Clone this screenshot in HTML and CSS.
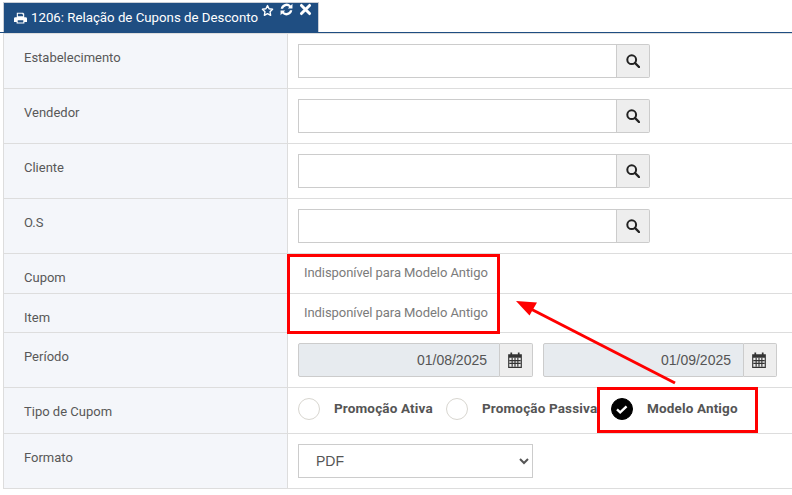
FILE: index.html
```html
<!DOCTYPE html>
<html lang="pt">
<head>
<meta charset="utf-8">
<title>Relação de Cupons de Desconto</title>
<link rel="stylesheet" href="styles.css">
</head>
<body>
<div class="tabbar">
  <div class="tab">
    <svg class="ico-print" viewBox="0 0 14 14" preserveAspectRatio="none"><path fill="#fff" fill-rule="evenodd" d="M3 .8h6.800L11 2v4H3zM4.200 2v3h5.600V3H9V2zM1.500 6.200A1.500 1.500 0 0 0 0 7.700v4h2.800v1.800h8.400v-1.800H14v-4a1.500 1.500 0 0 0-1.500-1.500zM4 9.700h6v2.600H4z"/></svg>
    <span class="tab-title">1206: Relação de Cupons de Desconto</span>
    <span class="tab-tools">
      <svg class="tool tool-star" viewBox="0 0 24 24"><path fill="none" stroke="#fff" stroke-width="2.600" stroke-linejoin="round" d="M12 2.800l2.900 6 6.500.9-4.700 4.600 1.100 6.500-5.800-3.100-5.800 3.100 1.100-6.500L2.600 9.700l6.500-.9z"/></svg>
      <svg class="tool" viewBox="0 0 24 24"><path fill="#fff" d="M21 10h-6.500L17 7.500a7 7 0 0 0-11.500 3H1.300A11 11 0 0 1 20 4.500L23 1.500V10zM3 14h6.500L7 16.500a7 7 0 0 0 11.500-3h4.200A11 11 0 0 1 4 19.500L1 22.500V14z"/></svg>
      <svg class="tool" viewBox="0 0 24 24"><path fill="none" stroke="#fff" stroke-width="5.500" stroke-linecap="round" d="M4.500 4.500l15 15M19.500 4.500l-15 15"/></svg>
    </span>
  </div>
</div>
<div class="form">
  <div class="row r55"><div class="lab">Estabelecimento</div><div class="val">
    <div class="search"><div class="inp"></div><div class="addon"><svg class="ico-s" viewBox="0 0 14 14"><circle cx="5.700" cy="5.700" r="4.400" fill="none" stroke="#222" stroke-width="2"/><path d="M9 9l4 4" stroke="#222" stroke-width="2.400" stroke-linecap="round"/></svg></div></div>
  </div></div>
  <div class="row r55"><div class="lab">Vendedor</div><div class="val">
    <div class="search"><div class="inp"></div><div class="addon"><svg class="ico-s" viewBox="0 0 14 14"><circle cx="5.700" cy="5.700" r="4.400" fill="none" stroke="#222" stroke-width="2"/><path d="M9 9l4 4" stroke="#222" stroke-width="2.400" stroke-linecap="round"/></svg></div></div>
  </div></div>
  <div class="row r55"><div class="lab">Cliente</div><div class="val">
    <div class="search"><div class="inp"></div><div class="addon"><svg class="ico-s" viewBox="0 0 14 14"><circle cx="5.700" cy="5.700" r="4.400" fill="none" stroke="#222" stroke-width="2"/><path d="M9 9l4 4" stroke="#222" stroke-width="2.400" stroke-linecap="round"/></svg></div></div>
  </div></div>
  <div class="row r55"><div class="lab">O.S</div><div class="val">
    <div class="search"><div class="inp"></div><div class="addon"><svg class="ico-s" viewBox="0 0 14 14"><circle cx="5.700" cy="5.700" r="4.400" fill="none" stroke="#222" stroke-width="2"/><path d="M9 9l4 4" stroke="#222" stroke-width="2.400" stroke-linecap="round"/></svg></div></div>
  </div></div>
  <div class="row r40"><div class="lab">Cupom</div><div class="val val-text">Indisponível para Modelo Antigo</div></div>
  <div class="row r39"><div class="lab">Item</div><div class="val val-text">Indisponível para Modelo Antigo</div></div>
  <div class="row r55"><div class="lab">Período</div><div class="val dates">
    <div class="date"><div class="date-inp">01/08/2025</div><div class="date-add"><svg class="ico-c" viewBox="1 0 12 14"><path fill="#333" fill-rule="evenodd" d="M1 2h2V.5h1.500V2h5V.5H11V2h2v12H1zM2 5v8h10V5z"/><path stroke="#333" stroke-width="1" d="M2 7.500h10M2 10h10M4.500 5v8M7 5v8M9.500 5v8"/></svg></div></div>
    <div class="date"><div class="date-inp date-inp2">01/09/2025</div><div class="date-add"><svg class="ico-c" viewBox="1 0 12 14"><path fill="#333" fill-rule="evenodd" d="M1 2h2V.5h1.500V2h5V.5H11V2h2v12H1zM2 5v8h10V5z"/><path stroke="#333" stroke-width="1" d="M2 7.500h10M2 10h10M4.500 5v8M7 5v8M9.500 5v8"/></svg></div></div>
  </div></div>
  <div class="row r46"><div class="lab">Tipo de Cupom</div><div class="val radios">
    <span class="radio"></span><span class="radio-lab rl1">Promoção Ativa</span>
    <span class="radio"></span><span class="radio-lab rl2">Promoção Passiva</span>
    <span class="radio on"><svg viewBox="0 0 22 22"><path d="M5.500 11.500l3.500 3.300 7-6.600" fill="none" stroke="#fff" stroke-width="2.600"/></svg></span><span class="radio-lab">Modelo Antigo</span>
  </div></div>
  <div class="row r55"><div class="lab">Formato</div><div class="val">
    <select class="sel"><option>PDF</option></select>
  </div></div>
</div>
<div class="box box-a"></div>
<div class="box box-b"></div>
<svg class="arrow" viewBox="0 0 792 495"><path d="M675 383L527 307" stroke="#f00" stroke-width="3" fill="none"/><path d="M516 301l21 1.500-7.500 13z" fill="#f00"/></svg>
</body>
</html>
```

FILE: styles.css
```css
* { box-sizing: border-box; }
html, body { margin: 0; padding: 0; background: #fff; }
body {
  width: 792px;
  height: 495px;
  overflow: hidden;
  position: relative;
  font-family: Roboto, "Liberation Sans", sans-serif;
  font-size: 13px;
  color: #555;
}
.tabbar {
  height: 33px;
  padding-left: 3px;
  padding-top: 2px;
  border-bottom: 1px solid #1f4e82;
}
.tab {
  width: 316px;
  height: 30px;
  background: #1f4e82;
  border: 1px solid #c9ced6;
  border-bottom: 0;
  color: #fff;
  display: flex;
  align-items: flex-start;
  padding-left: 10px;
}
.ico-print { width: 13px; height: 12px; margin-top: 9px; flex: none; }
.tab-title { margin-left: 4px; margin-top: 6px; line-height: 17px; font-size: 13.250px; white-space: nowrap; flex: none; }
.tab-tools { display: flex; gap: 6px; margin-left: 3px; margin-top: 0; }
.tool { width: 13px; height: 13px; }
.tool-star { margin-top: 1px; }
.form { margin-left: 3px; border-left: 1px solid #ddd; border-top: 1px solid #ddd; }
.row { display: flex; border-bottom: 1px solid #ddd; }
.r55 { height: 55px; }
.r40 { height: 40px; }
.r39 { height: 39px; }
.r46 { height: 46px; }
.lab {
  width: 284px;
  flex: none;
  background: #f4f6fa;
  border-right: 1px solid #ddd;
  padding: 15px 0 0 20px;
  line-height: 17px;
  color: #585858;
}
.val { flex: 1; padding: 10px 0 0 10px; }
.val-text { padding: 10px 0 0 16px; line-height: 17px; color: #7b7b7b; letter-spacing: -.07px; }
.search { display: flex; width: 352px; height: 34px; }
.inp { flex: 1; border: 1px solid #ccc; background: #fff; }
.addon {
  width: 33px;
  border: 1px solid #ccc;
  border-left: 0;
  border-radius: 0 2px 2px 0;
  background: #eee;
  display: flex;
  align-items: center;
  justify-content: center;
}
.ico-s { width: 14px; height: 14px; }
.dates { display: flex; gap: 10px; }
.date { display: flex; height: 34px; }
.date-inp {
  width: 202px;
  background: #e7ebef;
  border: 1px solid #ccc;
  border-radius: 2px 0 0 2px;
  text-align: right;
  padding: 7px 12px 0 0;
  line-height: 18px;
  font-family: "Liberation Sans", sans-serif;
  font-size: 14px;
  color: #555;
}
.date-inp2 { width: 201px; }
.date-add {
  width: 33px;
  background: #eee;
  border: 1px solid #ccc;
  border-left: 0;
  border-radius: 0 2px 2px 0;
  display: flex;
  align-items: center;
  justify-content: center;
  padding-right: 3px;
}
.ico-c { width: 14px; height: 16px; }
.radios { display: flex; align-items: flex-start; }
.radio {
  width: 22px;
  height: 22px;
  flex: none;
  border: 1px solid #d8d6d0;
  border-radius: 50%;
}
.radio.on { background: #000; border-color: #000; }
.radio.on svg { display: block; width: 20px; height: 20px; }
.radio-lab {
  font-weight: 700;
  font-size: 13.500px;
  letter-spacing: .15px;
  color: #555;
  line-height: 17px;
  margin-left: 14px;
  margin-top: 2px;
  white-space: nowrap;
}
.rl1 { width: 112px; }
.rl2 { width: 129px; }
.sel {
  display: block;
  width: 235px;
  height: 34px;
  border: 1px solid #ccc;
  background: #fff;
  color: #555;
  font-family: "Liberation Sans", sans-serif;
  font-size: 14px;
  padding: 0 13px;
}
.box { position: absolute; border: 3px solid #f00; }
.box-a { left: 287px; top: 254px; width: 213px; height: 80px; }
.box-b { left: 597px; top: 387px; width: 161px; height: 46px; }
.arrow { position: absolute; left: 0; top: 0; width: 792px; height: 495px; pointer-events: none; }
```
